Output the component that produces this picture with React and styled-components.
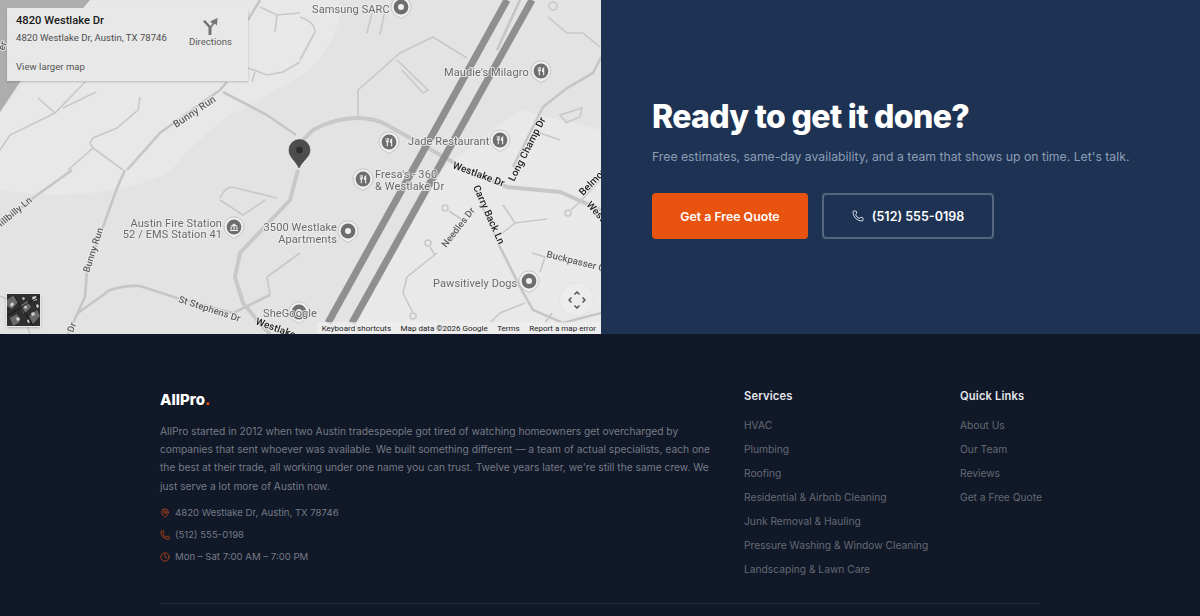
import React from "react"
import styled, { createGlobalStyle } from "styled-components"
import { MapPin, Phone, Clock } from "lucide-react"

const GlobalStyle = createGlobalStyle`
  html, body {
    margin: 0;
    padding: 0;
    height: 616px;
    overflow: hidden;
    background: #111827;
    font-family: "Inter", "Liberation Sans", sans-serif;
  }
  * { box-sizing: border-box; }
`

const Contact = styled.section`
  display: grid;
  grid-template-columns: 601px 599px;
  height: 334px;
`

const MapFrame = styled.div`
  position: relative;
  overflow: hidden;
  background: #e4e4e4;
`

const MapDrawing = styled.svg`
  display: block;
  width: 601px;
  height: 334px;
  filter: blur(0.4px);
`

const MapText = styled.text`
  font-family: "Roboto", "Liberation Sans", sans-serif;
  font-size: ${p => p.$size || 11}px;
  font-weight: ${p => (p.$road ? 500 : 400)};
  fill: ${p => (p.$road ? p.$dark ? "#222" : "#5c5c5c" : "#6a6a6a")};
  stroke: rgba(236, 236, 236, 0.85);
  stroke-width: 2px;
  paint-order: stroke;
  letter-spacing: 0.1px;
`

const InfoCard = styled.div`
  position: absolute;
  top: 8px;
  left: 7px;
  width: 241px;
  height: 73px;
  padding: 5px 9px;
  display: flex;
  justify-content: space-between;
  background: #e8e8e8;
  box-shadow: 0 1px 2px rgba(0, 0, 0, 0.2);
  font-family: "Roboto", "Liberation Sans", sans-serif;
`

const InfoText = styled.div`
  display: flex;
  flex-direction: column;
`

const PlaceName = styled.div`
  font-size: 11.2px;
  font-weight: 500;
  line-height: 16px;
  color: #1a1a1a;
`

const PlaceAddress = styled.div`
  margin-top: 2px;
  font-size: 9.6px;
  line-height: 14px;
  color: #4e4e4e;
`

const LargerMap = styled.div`
  margin-top: 15px;
  font-size: 9.6px;
  line-height: 14px;
  color: #555;
`

const DirectionsLink = styled.div`
  display: flex;
  flex-direction: column;
  align-items: center;
  gap: 1px;
  margin: 4px 7px 0 0;
  font-size: 9.6px;
  line-height: 12px;
  color: #5c5c5c;
`

const Thumbnail = styled.svg`
  position: absolute;
  left: 7px;
  bottom: 8px;
  width: 33px;
  height: 32px;
  box-shadow: 0 0 0 1px #e8e8e8, 0 1px 3px rgba(0, 0, 0, 0.4);
`

const MoveControl = styled.div`
  position: absolute;
  left: 560px;
  top: 283px;
  width: 33px;
  height: 33px;
  display: flex;
  align-items: center;
  justify-content: center;
  border-radius: 50%;
  background: #ececec;
  box-shadow: 0 0 2px rgba(0, 0, 0, 0.08);
`

const Attribution = styled.div`
  position: absolute;
  right: 0;
  bottom: 0;
  height: 12px;
  padding: 0 5px;
  display: flex;
  gap: 9.5px;
  background: rgba(240, 240, 240, 0.65);
  font-family: "Roboto", "Liberation Sans", sans-serif;
  font-size: 8px;
  line-height: 13px;
  color: #222;
`

const CtaPanel = styled.div`
  display: flex;
  flex-direction: column;
  justify-content: center;
  padding: 0 51px;
  background: #1e3354;
`

const CtaTitle = styled.h2`
  margin: 2px 0 0;
  font-size: 32px;
  line-height: 40px;
  font-weight: 800;
  letter-spacing: -0.66px;
  color: #fff;
`

const CtaLead = styled.p`
  margin: 10px 0 0;
  font-size: 12.24px;
  line-height: 20px;
  white-space: nowrap;
  color: #8d9db5;
`

const CtaButtons = styled.div`
  display: flex;
  gap: 14px;
  margin-top: 26px;
`

const CtaButton = styled.a`
  height: 46px;
  width: ${p => p.$width}px;
  display: flex;
  align-items: center;
  justify-content: center;
  gap: 8px;
  border-radius: 4px;
  font-size: ${p => p.$size}px;
  font-weight: 600;
  color: #fff;
  background: ${p => (p.$outline ? "transparent" : "#e8540f")};
  border: ${p => (p.$outline ? "2px solid rgba(255,255,255,0.25)" : "none")};
`

const Footer = styled.footer`
  background: #111827;
  height: 282px;
  padding-top: 51px;
`

const FooterInner = styled.div`
  width: 880px;
  margin: 0 auto;
`

const FooterGrid = styled.div`
  display: grid;
  grid-template-columns: 552px 184px 1fr;
  column-gap: 32px;
  padding-bottom: 18px;
  border-bottom: 1px solid rgba(255, 255, 255, 0.07);
`

const Brand = styled.div`
  font-size: 15px;
  line-height: 30px;
  font-weight: 800;
  color: #fff;
  span { color: #e8540f; }
`

const About = styled.p`
  margin: 7px 0 0;
  font-size: 10.24px;
  line-height: 18.2px;
  color: #767b87;
`

const ContactList = styled.ul`
  list-style: none;
  margin: 10px 0 0;
  padding: 0;
  display: flex;
  flex-direction: column;
  gap: 6px;
`

const ContactRow = styled.li`
  display: flex;
  align-items: center;
  gap: 5px;
  height: 16px;
  font-size: 9.6px;
  color: #767b87;
  svg { color: #c2491a; flex: none; }
`

const ColumnTitle = styled.h3`
  margin: 0 0 10px;
  font-size: 11.2px;
  line-height: 22px;
  font-weight: 600;
  letter-spacing: 0.15px;
  color: #e5e7eb;
`

const LinkList = styled.ul`
  list-style: none;
  margin: 0;
  padding: 0;
  display: flex;
  flex-direction: column;
`

const LinkItem = styled.li`
  height: 24px;
  font-size: 10.24px;
  line-height: 16px;
  white-space: nowrap;
  color: #656a75;
`

const roads = {
  thin: [
    "M85 82L55 113L10 135L0 150",
    "M63 108L96 92",
    "M38 98L55 113",
    "M140 97L138 110L117 128L93 138L90 143L93 148",
    "M93 148L68 170M93 148L123 170",
    "M220 198Q225 187 232 187L277 198",
    "M265 200L243 215L220 200",
    "M267 277L300 253M267 277L270 295",
    "M260 7L277 15L300 13M277 15L275 32",
    "M248 68L267 75L283 72L300 62M255 72L252 82",
    "M300 17Q315 22 315 32L300 60",
    "M367 33L372 13M380 35L385 10",
    "M358 117L358 90L400 53L433 37L467 58",
    "M397 60L428 90L423 93L402 70",
    "M548 17L567 33L583 33L600 47",
    "M540 133L560 140",
    "M567 123L560 115L582 108L580 117L565 123",
    "M437 253L407 277L403 293L413 313",
    "M449 211L467 223M430 247L435 255",
    "M503 205L515 223L547 219M515 223L500 235",
    "M571 210L580 202M532 253L545 257L540 272",
    "M490 323L500 313L525 303M552 313L545 323",
    "M580 202L600 180",
    "M0 296L20 305L30 334",
  ],
  medium: [
    "M127 170L160 133L220 90L227 82",
    "M223 92L267 115L296 135",
    "M72 170L33 198L0 225",
    "M125 170L117 188L103 227L87 270L85 297L73 323L68 334",
    "M78 313L110 290Q125 285 140 286L177 298L233 313L270 295",
    "M260 0L248 20",
    "M513 167L543 107L567 88L593 73L601 57",
    "M475 190L500 247L520 287L533 310L563 323L601 313",
    "M520 0L497 50",
  ],
  wide: [
    "M300 143L313 130Q335 118 357 118Q375 118 387 125L467 170L507 187L560 192L601 210",
    "M298 170L290 200L240 253L235 277L243 303L263 327L270 334",
  ],
}

const Poi = ({ x, y, kind }) => (
  <g transform={`translate(${x} ${y})`}>
    <path d="M0 11.5L-5 8.5A10 10 0 1 1 5 8.5Z" fill="#f0f0f0" stroke="#b5b5b5" strokeWidth=".7" />
    <circle r="7.4" fill="#6e6e6e" />
    {kind === "ring" && <circle r="3" fill="#f0f0f0" />}
    {kind === "food" && (
      <path d="M-3.2 -4V-1Q-3.2 .4 -2.2 .6V4.2H-1.1V.6Q-.1 .4 -.1 -1V-4H-.8V-1H-1.3V-4H-2V-1H-2.5V-4ZM3.2 -4Q1 -3.4 1 -.4V1H2.1V4.2H3.2Z" fill="#f0f0f0" />
    )}
    {kind === "civic" && <path d="M-4 -.6L0 -3.6L4 -.6ZM-3.6 .2H-2.2V2.6H-3.6ZM-.7 .2H.7V2.6H-.7ZM2.2 .2H3.6V2.6H2.2ZM-4 3H4V4H-4Z" fill="#f0f0f0" />}
  </g>
)

const MapCanvas = () => (
  <MapDrawing viewBox="0 0 601 334">
    <rect width="601" height="334" fill="#e3e3e3" />
    <path d="M0 112L90 0H340Q345 30 310 70Q260 100 230 115Q190 145 170 172Q100 205 0 190Z" fill="#e8e8e8" />
    <path d="M440 170L350 334H601V130L520 110Z" fill="#e9e9e9" />
    <path d="M90 0L20 82L0 112V0Z" fill="#adadad" />
    {roads.thin.map(d => <path key={d} d={d} fill="none" stroke="#c8c8c8" strokeWidth="1.6" />)}
    {roads.medium.map(d => <path key={d} d={d} fill="none" stroke="#c6c6c6" strokeWidth="2.6" />)}
    {roads.wide.map(d => <path key={d} d={d} fill="none" stroke="#c8c8c8" strokeWidth="4" />)}
    <circle cx="553" cy="6" r="4" fill="none" stroke="#c8c8c8" strokeWidth="1.6" />
    <circle cx="413" cy="316" r="3" fill="none" stroke="#c8c8c8" strokeWidth="1.6" />
    <circle cx="445" cy="208" r="3" fill="none" stroke="#c8c8c8" strokeWidth="1.6" />
    <circle cx="428" cy="243" r="3" fill="none" stroke="#c8c8c8" strokeWidth="1.6" />
    <circle cx="568" cy="213" r="3" fill="none" stroke="#c8c8c8" strokeWidth="1.6" />
    <path d="M507 0L328 323" stroke="#8f8f8f" strokeWidth="7" />
    <path d="M532 0L352 323" stroke="#8f8f8f" strokeWidth="7" />

    <Poi x={401} y={7} kind="ring" />
    <Poi x={541} y={71} kind="food" />
    <Poi x={500} y={140} kind="food" />
    <Poi x={389} y={142} kind="food" />
    <Poi x={363} y={179} kind="food" />
    <Poi x={234} y={227} kind="civic" />
    <Poi x={348} y={231} kind="ring" />
    <Poi x={529} y={281} kind="ring" />
    <Poi x={299} y={312} kind="ring" />

    <MapText x="312" y="13">Samsung SARC</MapText>
    <MapText x="444" y="76">Maudie's Milagro</MapText>
    <MapText x="408" y="145">Jade Restaurant</MapText>
    <MapText x="375" y="178">Fresa's - 360</MapText>
    <MapText x="375" y="190">&amp; Westlake Dr</MapText>
    <MapText x="222" y="227" textAnchor="end">Austin Fire Station</MapText>
    <MapText x="222" y="238" textAnchor="end">52 / EMS Station 41</MapText>
    <MapText x="337" y="231" textAnchor="end">3500 Westlake</MapText>
    <MapText x="337" y="243" textAnchor="end">Apartments</MapText>
    <MapText x="433" y="287">Pawsitively Dogs</MapText>
    <MapText x="263" y="317">SheGoogle</MapText>

    <MapText $road $size={10} transform="translate(176 128) rotate(-34)">Bunny Run</MapText>
    <MapText $road $size={9.5} transform="translate(89 273) rotate(-72)">Bunny Run</MapText>
    <MapText $road $size={9.5} transform="translate(-2 230) rotate(-40)">Hillbilly Ln</MapText>
    <MapText $road $size={9.5} transform="translate(178 302) rotate(18)">St Stephens Dr</MapText>
    <MapText $road $size={9.5} transform="translate(73 333) rotate(-70)">Dr</MapText>
    <MapText $road $size={9.5} transform="translate(546 257) rotate(14)">Buckpasser Ct</MapText>
    <MapText $road $size={9.5} transform="translate(446 248) rotate(-52)">Needles Dr</MapText>
    <MapText $road $dark $size={10} transform="translate(514 182) rotate(-63)">Long Champ Dr</MapText>
    <MapText $road $dark $size={10} transform="translate(473 187) rotate(66)">Carry Back Ln</MapText>
    <MapText $road $dark $size={10} transform="translate(452 168) rotate(20)">Westlake Dr</MapText>
    <MapText $road $dark $size={10} transform="translate(255 324) rotate(20)">Westlake</MapText>
    <MapText $road $dark $size={10} transform="translate(583 196) rotate(-45)">Belmont</MapText>
    <MapText $road $dark $size={10} transform="translate(586 205) rotate(48)">West</MapText>
    <MapText $road $size={9.5} transform="translate(4 51) rotate(-70)">er</MapText>

    <path d="M299 168C295 160 289 157 289 150A10.2 10.2 0 0 1 310 150C310 157 303 160 299 168Z" fill="#4d4d4d" stroke="#3c3c3c" strokeWidth=".6" />
    <circle cx="299.5" cy="150" r="3.3" fill="#2e2e2e" />
  </MapDrawing>
)

const SatelliteThumb = () => (
  <Thumbnail viewBox="0 0 33 32">
    <rect width="33" height="32" fill="#2f2f2f" />
    <path d="M0 6L7 1L11 8L5 15L0 12ZM13 12L20 7L24 13L17 20ZM22 22L30 16L33 22L26 30ZM3 24L10 20L13 28L6 32Z" fill="#6a6a6a" />
    <path d="M3 10L6 8L7 11L4 13ZM17 12L19 11L20 14L18 15ZM25 3L29 2L30 6L26 7ZM9 24L12 23L13 26L10 27ZM24 19L27 18L28 21L25 22ZM15 4L17 3L18 5L16 6ZM29 11L31 10L32 13L30 14ZM20 26L22 25L23 28L21 29Z" fill="#d0d0d0" />
    <path d="M0 22L33 2M6 0L26 32" stroke="#161616" strokeWidth="1" />
  </Thumbnail>
)

const DirectionsIcon = () => (
  <svg width="16" height="18" viewBox="0 0 16 18">
    <path d="M6.5 18V10.5L1 4.5L3 3L8.5 9L10.5 6.5L8 4.5L15.5 1L15 8.5L12.7 6.5L9.5 10.5V18Z" fill="#757575" />
  </svg>
)

const MoveIcon = () => (
  <svg width="18" height="18" viewBox="0 0 18 18" fill="none" stroke="#555" strokeWidth="1.5">
    <path d="M6.5 3.5L9 1L11.5 3.5M6.5 14.5L9 17L11.5 14.5M3.5 6.5L1 9L3.5 11.5M14.5 6.5L17 9L14.5 11.5" />
  </svg>
)

const services = [
  "HVAC",
  "Plumbing",
  "Roofing",
  "Residential & Airbnb Cleaning",
  "Junk Removal & Hauling",
  "Pressure Washing & Window Cleaning",
  "Landscaping & Lawn Care",
]

const quickLinks = ["About Us", "Our Team", "Reviews", "Get a Free Quote"]

const App = () => (
  <>
    <GlobalStyle />
    <Contact>
      <MapFrame>
        <MapCanvas />
        <InfoCard>
          <InfoText>
            <PlaceName>4820 Westlake Dr</PlaceName>
            <PlaceAddress>4820 Westlake Dr, Austin, TX 78746</PlaceAddress>
            <LargerMap>View larger map</LargerMap>
          </InfoText>
          <DirectionsLink>
            <DirectionsIcon />
            Directions
          </DirectionsLink>
        </InfoCard>
        <SatelliteThumb />
        <MoveControl><MoveIcon /></MoveControl>
        <Attribution>
          <span>Keyboard shortcuts</span>
          <span>Map data ©2026 Google</span>
          <span>Terms</span>
          <span>Report a map error</span>
        </Attribution>
      </MapFrame>
      <CtaPanel>
        <CtaTitle>Ready to get it done?</CtaTitle>
        <CtaLead>Free estimates, same-day availability, and a team that shows up on time. Let's talk.</CtaLead>
        <CtaButtons>
          <CtaButton $width={156} $size={12.3}>Get a Free Quote</CtaButton>
          <CtaButton $outline $width={172} $size={12.5}>
            <Phone size={12} strokeWidth={1.6} />
            (512) 555-0198
          </CtaButton>
        </CtaButtons>
      </CtaPanel>
    </Contact>
    <Footer>
      <FooterInner>
        <FooterGrid>
          <div>
            <Brand>AllPro<span>.</span></Brand>
            <About>
              AllPro started in 2012 when two Austin tradespeople got tired of watching homeowners get overcharged by
              companies that sent whoever was available. We built something different — a team of actual specialists, each one
              the best at their trade, all working under one name you can trust. Twelve years later, we're still the same crew. We
              just serve a lot more of Austin now.
            </About>
            <ContactList>
              <ContactRow><MapPin size={10} />4820 Westlake Dr, Austin, TX 78746</ContactRow>
              <ContactRow><Phone size={10} />(512) 555-0198</ContactRow>
              <ContactRow><Clock size={10} />Mon – Sat 7:00 AM – 7:00 PM</ContactRow>
            </ContactList>
          </div>
          <div>
            <ColumnTitle>Services</ColumnTitle>
            <LinkList>
              {services.map(service => <LinkItem key={service}>{service}</LinkItem>)}
            </LinkList>
          </div>
          <div>
            <ColumnTitle>Quick Links</ColumnTitle>
            <LinkList>
              {quickLinks.map(link => <LinkItem key={link}>{link}</LinkItem>)}
            </LinkList>
          </div>
        </FooterGrid>
      </FooterInner>
    </Footer>
  </>
)

export default App
